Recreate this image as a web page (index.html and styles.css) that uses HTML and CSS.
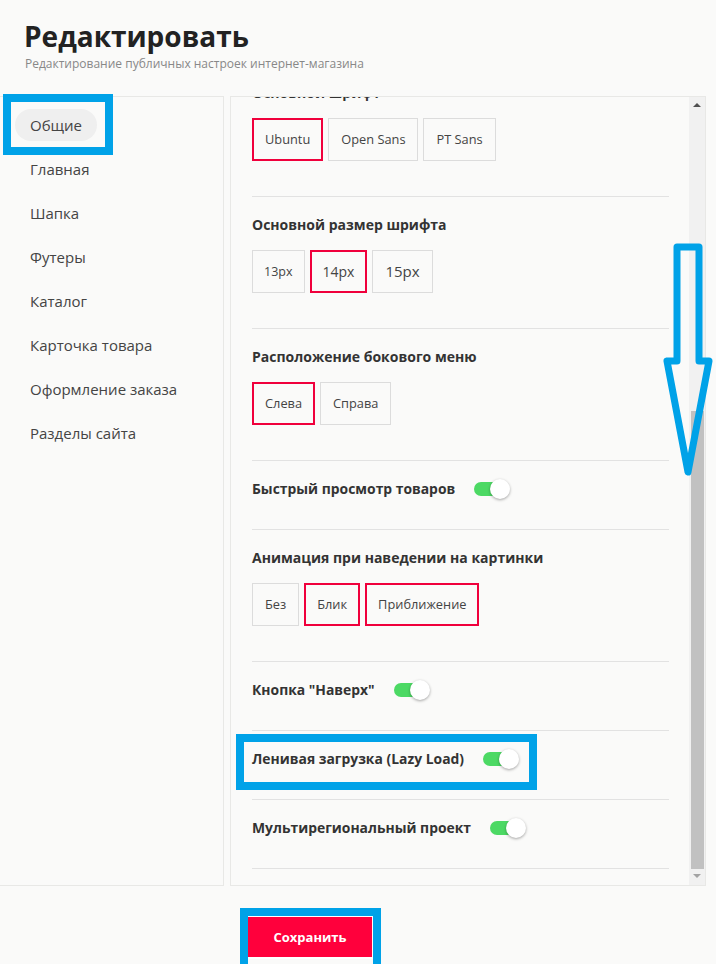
FILE: index.html
```html
<!DOCTYPE html>
<html lang="ru">
<head>
  <meta charset="UTF-8" />
  <meta name="viewport" content="width=device-width, initial-scale=1.0"/>
  <title>Редактировать</title>
  <link rel="stylesheet" href="styles.css">
</head>
<body>
  <div class="page-header">
    <h1 class="page-title">Редактировать</h1>
    <p class="page-subtitle">Редактирование публичных настроек интернет-магазина</p>
  </div>

  <div class="editor">
    <div class="sidebar">
      <div class="nav-item active">Общие</div>
      <div class="nav-item">Главная</div>
      <div class="nav-item">Шапка</div>
      <div class="nav-item">Футеры</div>
      <div class="nav-item">Каталог</div>
      <div class="nav-item">Карточка товара</div>
      <div class="nav-item">Оформление заказа</div>
      <div class="nav-item">Разделы сайта</div>
    </div>

    <div class="settings">
      <div class="settings-body">
        <div class="settings-list">
          <div class="section">
            <div class="section-title">Основной шрифт</div>
            <div class="options">
              <span class="option selected">Ubuntu</span>
              <span class="option">Open Sans</span>
              <span class="option">PT Sans</span>
            </div>
          </div>
          <div class="section">
            <div class="section-title">Основной размер шрифта</div>
            <div class="options">
              <span class="option size-13">13px</span>
              <span class="option selected size-14">14px</span>
              <span class="option size-15">15px</span>
            </div>
          </div>
          <div class="section">
            <div class="section-title">Расположение бокового меню</div>
            <div class="options">
              <span class="option selected">Слева</span>
              <span class="option">Справа</span>
            </div>
          </div>
          <div class="section toggle-row">
            <span class="section-title">Быстрый просмотр товаров</span>
            <span class="switch on"></span>
          </div>
          <div class="section">
            <div class="section-title">Анимация при наведении на картинки</div>
            <div class="options">
              <span class="option">Без</span>
              <span class="option selected">Блик</span>
              <span class="option selected">Приближение</span>
            </div>
          </div>
          <div class="section toggle-row">
            <span class="section-title">Кнопка "Наверх"</span>
            <span class="switch on"></span>
          </div>
          <div class="section toggle-row">
            <span class="section-title">Ленивая загрузка (Lazy Load)</span>
            <span class="switch on"></span>
          </div>
          <div class="section toggle-row">
            <span class="section-title">Мультирегиональный проект</span>
            <span class="switch on"></span>
          </div>
        </div>
      </div>
      <div class="scrollbar">
        <div class="scroll-btn up"></div>
        <div class="scroll-track">
          <div class="scroll-thumb"></div>
        </div>
        <div class="scroll-btn down"></div>
      </div>
    </div>
  </div>

  <div class="footer">
    <button class="save-btn">Сохранить</button>
  </div>

  <!-- annotation marks drawn over the screenshot -->
  <svg class="marks" width="716" height="964" viewBox="0 0 716 964">
    <rect x="7" y="98" width="102" height="53" />
    <rect x="240" y="738" width="293" height="48" />
    <rect x="244" y="912" width="133" height="56" />
    <path d="M677 247 H699 V361 H709 L688 472 L667 361 H677 Z" />
  </svg>
</body>
</html>
```

FILE: styles.css
```css
body {
  font-family: "Open Sans", "Noto Sans", sans-serif;
  background-color: #fafaf9;
  margin: 0;
  color: #333;
  width: 716px;
  height: 964px;
  overflow: hidden;
  position: relative;
}
.page-header {
  padding: 16px 24px 0;
  height: 80px;
  box-sizing: border-box;
}
.page-title {
  font-size: 28px;
  font-weight: 700;
  line-height: 40px;
  margin: 0;
  color: #222;
}
.page-subtitle {
  font-size: 12px;
  color: #888;
  margin: 0 0 0 1px;
  line-height: 16px;
}
.editor {
  display: flex;
  gap: 6px;
  margin-top: 16px;
  margin-right: 10px;
  height: 790px;
}
.sidebar {
  width: 224px;
  box-sizing: border-box;
  border: 1px solid #e8e8e6;
  border-left: none;
  padding: 12px 0 0 15px;
}
.nav-item {
  display: table;
  font-size: 15px;
  color: #444;
  line-height: 32px;
  padding: 0 15px;
  margin-bottom: 12px;
  border-radius: 16px;
}
.nav-item.active {
  background: #efefef;
}
.settings {
  flex: 1;
  display: flex;
  border: 1px solid #e8e8e6;
  overflow: hidden;
}
.settings-body {
  flex: 1;
  overflow: hidden;
  padding: 0 20px 0 21px;
}
.settings-list {
  margin-top: -32px;
}
.section {
  border-bottom: 1px solid #e2e2e2;
  padding: 19px 0 35px;
}
.section-title {
  font-size: 14px;
  font-weight: 700;
  line-height: 18px;
  color: #333;
}
.options {
  display: flex;
  gap: 5px;
  margin-top: 16px;
}
.option {
  font-size: 12.8px;
  color: #444;
  line-height: 41px;
  padding: 0 12px;
  border: 1px solid #dcdcdc;
}
.option.selected {
  border-color: #f0003c;
  box-shadow: inset 0 0 0 1px #f0003c;
}
.option.size-13 {
  font-size: 12.5px;
  padding: 0 11px;
}
.option.size-14 {
  font-size: 14px;
  padding: 0 12px;
}
.option.size-15 {
  font-size: 15px;
  padding: 0 12px;
}
.toggle-row {
  display: flex;
  align-items: center;
  gap: 19px;
  height: 20px;
  padding: 18px 0 30px;
}
.toggle-row .section-title {
  font-size: 13.9px;
}
.switch {
  position: relative;
  width: 30px;
  height: 14px;
  border-radius: 7px;
  background: #4cd964;
}
.switch::after {
  content: "";
  position: absolute;
  right: -6px;
  top: -3px;
  width: 20px;
  height: 20px;
  border-radius: 50%;
  background: #fff;
  box-shadow: 0 1px 3px rgba(0, 0, 0, 0.35);
}
.scrollbar {
  width: 16px;
  background: #f1f1f1;
  display: flex;
  flex-direction: column;
}
.scroll-btn {
  height: 16px;
  position: relative;
}
.scroll-btn::after {
  content: "";
  position: absolute;
  left: 4px;
  top: 6px;
  border-left: 4px solid transparent;
  border-right: 4px solid transparent;
}
.scroll-btn.up::after {
  border-bottom: 4px solid #505050;
}
.scroll-btn.down::after {
  top: 5px;
  border-top: 4px solid #a3a3a3;
}
.scroll-track {
  flex: 1;
  padding: 298px 1px 0 2px;
}
.scroll-thumb {
  height: 458px;
  background: #c1c1c1;
}
.footer {
  padding-left: 248px;
  padding-top: 31px;
}
.save-btn {
  font-family: "Open Sans", "Noto Sans", sans-serif;
  font-size: 13px;
  font-weight: 700;
  color: #fff;
  background: #ff003c;
  border: none;
  width: 124px;
  height: 40px;
  outline: 2px solid #fff;
}
.marks {
  position: absolute;
  left: 0;
  top: 0;
  pointer-events: none;
}
.marks rect,
.marks path {
  fill: none;
  stroke: #00a2e8;
  stroke-width: 8;
}
.marks path {
  stroke-width: 7;
  stroke-linejoin: round;
}
```
